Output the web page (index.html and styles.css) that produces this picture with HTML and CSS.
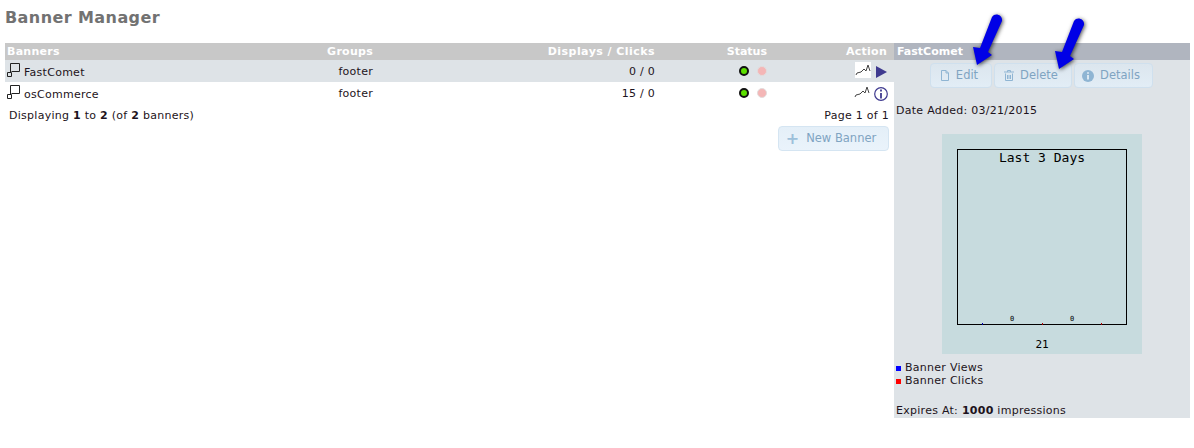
FILE: index.html
```html
<!DOCTYPE html>
<html lang="en">
<head>
<meta charset="utf-8">
<title>Banner Manager</title>
<link rel="stylesheet" href="styles.css">
</head>
<body>
<h1 class="title">Banner Manager</h1>
<div class="layout">
  <div class="main">
    <div class="row head">
      <div class="c-name">Banners</div>
      <div class="c-group">Groups</div>
      <div class="c-stats">Displays / Clicks</div>
      <div class="c-status">Status</div>
      <div class="c-action">Action</div>
    </div>
    <div class="row item active">
      <div class="c-name">
        <svg class="win" width="14" height="14" viewBox="0 0 14 14"><path d="M3.5 9V.5H12.5V8.5H4.5M.5 9.5H4.5V13.5H.5Z" fill="none" stroke="#222" stroke-width="1"/></svg>
        FastComet
      </div>
      <div class="c-group">footer</div>
      <div class="c-stats">0 / 0</div>
      <div class="c-status"><span class="dot on"></span><span class="dot off"></span></div>
      <div class="c-action">
        <svg class="graph white" width="16" height="16" viewBox="0 0 16 16"><path d="M1 13L2 11 6 10 9 7 11 9 13 3 15 9" fill="none" stroke="#444" stroke-width="1"/></svg>
        <svg class="play" width="13" height="12" viewBox="0 0 13 12"><path d="M1 0L12 6 1 12Z" fill="#3f3a8f"/></svg>
      </div>
    </div>
    <div class="row item">
      <div class="c-name">
        <svg class="win" width="14" height="14" viewBox="0 0 14 14"><path d="M3.5 9V.5H12.5V8.5H4.5M.5 9.5H4.5V13.5H.5Z" fill="none" stroke="#222" stroke-width="1"/></svg>
        osCommerce
      </div>
      <div class="c-group">footer</div>
      <div class="c-stats">15 / 0</div>
      <div class="c-status"><span class="dot on"></span><span class="dot off"></span></div>
      <div class="c-action">
        <svg class="graph" width="16" height="16" viewBox="0 0 16 16"><path d="M1 13L2 11 6 10 9 7 11 9 13 3 15 9" fill="none" stroke="#444" stroke-width="1"/></svg>
        <svg class="info" width="14" height="14" viewBox="0 0 14 14"><circle cx="7" cy="7" r="6.3" fill="#fff" stroke="#3f3a8f" stroke-width="1.2"/><path d="M7 6V11.5M7 2.5V4.5" stroke="#3f3a8f" stroke-width="1.8" fill="none"/></svg>
      </div>
    </div>
    <div class="paging">
      <div>Displaying <b>1</b> to <b>2</b> (of <b>2</b> banners)</div>
      <div>Page 1 of 1</div>
    </div>
    <div class="new-row">
      <a class="btn new"><span class="plus">+</span>New Banner</a>
    </div>
  </div>
  <aside class="side">
    <div class="side-head">FastComet</div>
    <div class="side-btns">
      <a class="btn edit">
        <svg width="10" height="11" viewBox="0 0 10 11"><path d="M1.5 .5H6L8.5 3V10.5H1.5ZM6 .5V3H8.5" fill="none" stroke="#8fb5d3"/></svg>
        Edit
      </a>
      <a class="btn del">
        <svg width="10" height="11" viewBox="0 0 10 11"><path d="M0 2H10M3.5 2V.5H6.5V2M1.5 3.5V10.5H8.5V3.5M3.5 5V9M5 5V9M6.5 5V9" fill="none" stroke="#8fb5d3"/></svg>
        Delete
      </a>
      <a class="btn det">
        <svg width="12" height="12" viewBox="0 0 12 12"><circle cx="6" cy="6" r="6" fill="#8fb5d3"/><path d="M6 5V9.5M6 2.2V3.8" stroke="#e4eef6" stroke-width="1.8"/></svg>
        Details
      </a>
    </div>
    <div class="date">Date Added: 03/21/2015</div>
    <div class="chart">
      <div class="plot">
        <div class="plot-title">Last 3 Days</div>
        <div class="plot-vals"><span>0</span><span>0</span></div>
      </div>
      <div class="ticks"><i class="b"></i><i class="r"></i><i class="r"></i></div>
      <div class="axis">21</div>
    </div>
    <div class="legend"><span class="sq blue"></span>Banner Views</div>
    <div class="legend"><span class="sq red"></span>Banner Clicks</div>
    <div class="expires">Expires At: <b>1000</b> impressions</div>
  </aside>
</div>
<svg class="arrow arrow-1" width="36" height="56" viewBox="0 0 36 56"><path d="M22 5L10 36 3 35 7 53 22 43 18 40 32 9C33 3 25 0 22 5Z" fill="#0000e6"/></svg>
<svg class="arrow arrow-2" width="36" height="56" viewBox="0 0 36 56"><path d="M22 5L10 36 3 35 7 53 22 43 18 40 32 9C33 3 25 0 22 5Z" fill="#0000e6"/></svg>
</body>
</html>
```
FILE: styles.css
```css
* { box-sizing: border-box; }
html, body { margin: 0; background: #fff; }
body {
  position: relative;
  height: 448px;
  overflow: hidden;
  font: 11px/13px "DejaVu Sans", Verdana, sans-serif;
  letter-spacing: .27px;
  color: #1d1320;
}
.title {
  margin: 0;
  padding: 8px 0 0 5px;
  height: 43px;
  font-size: 16px;
  line-height: 20px;
  font-weight: bold;
  letter-spacing: .42px;
  color: #727272;
}
.layout {
  display: flex;
  padding-left: 5px;
  width: 1190px;
}
.main { width: 889px; }
.row {
  display: grid;
  grid-template-columns: 257px 109px 282px 112px 120px;
  align-items: center;
  padding: 0 7px 0 2px;
}
.head {
  height: 17px;
  background: #c8c8c8;
  color: #fff;
  font-weight: bold;
}
.item { height: 22px; }
.active { background: #dee3e7; }
.c-name { display: flex; align-items: center; gap: 3px; }
.item .c-name { padding-top: 2px; }
.c-group, .c-stats, .c-action { text-align: right; }
.c-status { display: flex; justify-content: flex-end; gap: 8px; align-items: center; }
.head .c-status { display: block; text-align: right; letter-spacing: 0; }
.head .c-stats { letter-spacing: .45px; }
.win { margin-top: -4px; }
.c-action { display: flex; justify-content: flex-end; align-items: center; gap: 4px; }
.head .c-action { display: block; }
.item .c-action { margin-right: -1px; }
.graph { margin-top: -3px; }
.play { margin-top: 1px; }
.info { margin-top: 1px; }
.white { background: #fff; }
.dot { width: 10px; height: 10px; border-radius: 50%; margin-top: -1px; }
.on { background: #5ce000; border: 2px solid #111; }
.off { background: #f4b6b6; border: 1px solid #e3dcdc; }
.paging {
  display: flex;
  justify-content: space-between;
  padding: 5px 5px 0 4px;
  height: 22px;
}
.new-row { display: flex; justify-content: flex-end; padding-right: 5px; }
.btn {
  display: inline-flex;
  align-items: center;
  justify-content: center;
  height: 25px;
  border: 1px solid #d5e5f2;
  border-radius: 4px;
  background: linear-gradient(#e4eff8, #eaf3fb);
  color: #7fa4c2;
  font-size: 11.5px;
  letter-spacing: 0;
}
.new { width: 111px; gap: 7px; padding-right: 5px; }
.plus { font-size: 16px; font-weight: bold; color: #9dc0da; line-height: 12px; }
.side {
  width: 296px;
  height: 375px;
  background: #dee3e7;
  padding-left: 2px;
}
.side-head {
  height: 17px;
  margin-left: -2px;
  padding-left: 3px;
  background: #b0b5bf;
  color: #fff;
  font-weight: bold;
  line-height: 17px;
  letter-spacing: 0;
}
.side-btns { display: flex; gap: 2px; padding: 3px 0 0 34px; }
.side-btns .btn { height: 25px; gap: 6px; border-color: #cfe0ee; background: linear-gradient(#dce6ee, #e2edf6); }
.edit { width: 62px; padding-right: 4px; }
.del { width: 78px; padding-right: 4px; }
.det { width: 79px; padding-right: 5px; }
.date { margin-top: 16px; }
.chart {
  position: relative;
  width: 200px;
  height: 220px;
  margin: 17px 0 0 46px;
  padding: 15px 15px 0;
  background: #c7dbde;
  color: #000;
  letter-spacing: 0;
}
.plot {
  height: 176px;
  border: 1px solid #000;
  position: relative;
  font-family: "DejaVu Sans Mono", monospace;
}
.plot-title { text-align: center; font-size: 13px; line-height: 16px; }
.plot-vals span { position: absolute; bottom: 0; font-size: 7px; line-height: 9px; }
.plot-vals span:first-child { left: 52px; }
.plot-vals span:last-child { left: 112px; }
.ticks i { position: absolute; top: 189px; width: 1px; height: 2px; }
.ticks i.b { left: 40px; background: #00a; }
.ticks i.r { background: #a00; }
.ticks i.r:nth-child(2) { left: 100px; }
.ticks i.r:nth-child(3) { left: 159px; }
.axis { text-align: center; margin-top: 13px; font: 11px/13px "DejaVu Sans Mono", monospace; }
.legend { display: flex; align-items: center; gap: 4px; height: 13px; }
.chart + .legend { margin-top: 7px; }
.sq { width: 5px; height: 5px; margin-top: 1px; }
.blue { background: #00f; }
.red { background: #f00; }
.expires { margin-top: 17px; }
.arrow { position: absolute; filter: drop-shadow(1px 1px 2px rgba(0,0,0,.7)); }
.arrow-1 { left: 970px; top: 12px; }
.arrow-2 { left: 1052px; top: 16px; }
```
